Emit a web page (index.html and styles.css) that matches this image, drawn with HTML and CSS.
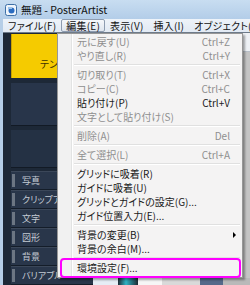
FILE: index.html
```html
<!DOCTYPE html>
<html>
    <head>
        <title>無題 - PosterArtist</title>
        <link rel="stylesheet" href="styles.css">
    </head>
    <body>
        <div class="window">
            <div class="titlebar">
                <svg class="titlebar__icon" viewBox="0 0 12 12">
                    <rect x="0.5" y="0.5" width="11" height="11" rx="2" fill="#eef4fb" stroke="#3d6fa6"/>
                    <circle cx="6.5" cy="6.5" r="3" fill="#2b6cc0"/>
                    <path d="M3 3 L7 3 L7 5 L3 5 Z" fill="#9cc3ea"/>
                </svg>
                <span>無題 - PosterArtist</span>
            </div>
            <div class="frame">
                <div class="frame__edge"></div>
                <div class="app">
                    <div class="menubar">
                        <span class="menubar__item">ファイル(F)</span>
                        <span class="menubar__item menubar__item--open">編集(E)</span>
                        <span class="menubar__item">表示(V)</span>
                        <span class="menubar__item">挿入(I)</span>
                        <span class="menubar__item">オブジェクト(O)</span>
                        <span class="menubar__item">クラフト(C)</span>
                    </div>
                    <div class="client">
                        <div class="sidebar">
                            <div class="template">テンプレート</div>
                            <div class="panel"></div>
                            <div class="panel panel--small"></div>
                            <ul class="layers">
                                <li class="layers__item">写真</li>
                                <li class="layers__item">クリップアート</li>
                                <li class="layers__item">文字</li>
                                <li class="layers__item">図形</li>
                                <li class="layers__item">背景</li>
                                <li class="layers__item">バリアブル</li>
                            </ul>
                        </div>
                        <div class="workspace">
                            <div class="toolbar">
                                <svg class="toolbar__icon" viewBox="0 0 12 12">
                                    <rect x="0.5" y="2.5" width="11" height="8" fill="#f3c64a" stroke="#b08a1c"/>
                                    <rect x="2" y="0.5" width="6" height="4" fill="#4a86d0"/>
                                </svg>
                            </div>
                            <div class="stage"></div>
                            <div class="thumbs">
                                <div class="thumbs__item thumbs__item--light"></div>
                                <div class="thumbs__item thumbs__item--teal"></div>
                                <div class="thumbs__item thumbs__item--white"></div>
                                <div class="thumbs__item thumbs__item--grey"></div>
                                <div class="thumbs__item thumbs__item--navy"></div>
                                <div class="thumbs__item thumbs__item--rest"></div>
                            </div>
                        </div>
                    </div>
                </div>
            </div>

            <ul class="dropdown">
                <li class="dropdown__item"><span>元に戻す(U)</span><span>Ctrl+Z</span></li>
                <li class="dropdown__item"><span>やり直し(R)</span><span>Ctrl+Y</span></li>
                <li class="dropdown__sep"></li>
                <li class="dropdown__item"><span>切り取り(T)</span><span>Ctrl+X</span></li>
                <li class="dropdown__item"><span>コピー(C)</span><span>Ctrl+C</span></li>
                <li class="dropdown__item dropdown__item--enabled"><span>貼り付け(P)</span><span>Ctrl+V</span></li>
                <li class="dropdown__item"><span>文字として貼り付け(S)</span></li>
                <li class="dropdown__sep"></li>
                <li class="dropdown__item"><span>削除(A)</span><span>Del</span></li>
                <li class="dropdown__sep"></li>
                <li class="dropdown__item"><span>全て選択(L)</span><span>Ctrl+A</span></li>
                <li class="dropdown__sep"></li>
                <li class="dropdown__item dropdown__item--enabled"><span>グリッドに吸着(R)</span></li>
                <li class="dropdown__item dropdown__item--enabled"><span>ガイドに吸着(U)</span></li>
                <li class="dropdown__item dropdown__item--enabled"><span>グリッドとガイドの設定(G)...</span></li>
                <li class="dropdown__item dropdown__item--enabled"><span>ガイド位置入力(E)...</span></li>
                <li class="dropdown__sep"></li>
                <li class="dropdown__item dropdown__item--enabled"><span>背景の変更(B)</span><span class="dropdown__arrow"></span></li>
                <li class="dropdown__item dropdown__item--enabled"><span>背景の余白(M)...</span></li>
                <li class="dropdown__sep"></li>
                <li class="dropdown__item dropdown__item--enabled"><span>環境設定(F)...</span></li>
            </ul>
            <div class="callout"></div>
        </div>
    </body>
</html>
```

FILE: styles.css
```css
* {
  box-sizing: border-box;
  margin: 0;
  padding: 0;
}

html,
body {
  width: 250px;
  height: 285px;
  overflow: hidden;
}

body {
  font-family: "Noto Sans CJK JP", "Noto Sans", sans-serif;
  font-feature-settings: "palt";
  line-height: 12px;
  background-color: #1d2837;
}

ul {
  list-style: none;
}

.window {
  position: relative;
  display: grid;
  grid-template-rows: 19px 1fr;
  height: 285px;
}

/* title bar */
.titlebar {
  display: flex;
  align-items: center;
  gap: 4px;
  padding-left: 5px;
  background: linear-gradient(#c8ddf1, #b3cde8);
  font-size: 10.5px;
  color: #111;
  white-space: nowrap;
}

.titlebar__icon {
  width: 12px;
  height: 12px;
}

.frame {
  display: flex;
  min-height: 0;
}

.frame__edge {
  width: 3px;
  background-color: #b6cee7;
}

.app {
  flex: 1;
  display: flex;
  flex-direction: column;
  min-width: 0;
}

/* menu bar */
.menubar {
  height: 14px;
  display: flex;
  align-items: center;
  background: linear-gradient(#eef3f9, #e2eaf4);
  border-bottom: 1px solid #6e7b8a;
  font-size: 10px;
  letter-spacing: 0.2px;
  color: #111;
  white-space: nowrap;
  overflow: hidden;
}

.menubar__item {
  flex-shrink: 0;
  height: 13px;
  display: flex;
  align-items: center;
  padding: 0 4px;
  border: 1px solid transparent;
}

.menubar__item--open {
  border-color: #8e9cb0;
  border-radius: 2px;
  background: linear-gradient(#f6f8fb, #dfe6ef);
}

/* client area */
.client {
  flex: 1;
  display: flex;
  min-height: 0;
}

.sidebar {
  width: 90px;
  display: flex;
  flex-direction: column;
  padding: 1px 0 0 8px;
  background-color: #1d2837;
}

.template {
  height: 46px;
  display: flex;
  align-items: flex-end;
  padding: 0 0 8px 28px;
  background-color: #f5cb00;
  border-left: 1px solid #c9a000;
  font-size: 10px;
  color: #3b3100;
  white-space: nowrap;
  overflow: hidden;
}

.panel {
  height: 46px;
  margin-top: 5px;
  background-color: #28354a;
  border-bottom: 1px solid #121a25;
}

.panel--small {
  height: 40px;
  margin-top: 4px;
  background-color: #243144;
}

.layers {
  margin-top: 3px;
}

.layers__item {
  height: 19px;
  display: flex;
  align-items: center;
  gap: 7px;
  padding-left: 1px;
  background-color: #29364a;
  border-top: 1px solid #3b4759;
  border-bottom: 1px solid #141d29;
  font-size: 9px;
  color: #c4cbd4;
  white-space: nowrap;
}

.layers__item::before {
  content: "";
  width: 3px;
  height: 13px;
  background-color: #6c7683;
}

.workspace {
  flex: 1;
  display: flex;
  flex-direction: column;
  min-width: 0;
  background-color: #c4c4c4;
}

.toolbar {
  height: 19px;
  display: flex;
  justify-content: flex-end;
  align-items: center;
  background-color: #eef1f5;
  border-bottom: 1px solid #b8bfc8;
}

.toolbar__icon {
  width: 12px;
  height: 12px;
  flex-shrink: 0;
  margin-right: -7px;
}

.stage {
  flex: 1;
  background-color: #c4c4c4;
}

.thumbs {
  height: 7px;
  display: flex;
}

.thumbs__item--light {
  width: 25px;
  background-color: #e6edf5;
}

.thumbs__item--teal {
  width: 20px;
  background: linear-gradient(to right, #1d2a33, #2fb3c4 40%, #1d2a33);
}

.thumbs__item--white {
  width: 24px;
  background-color: #f6f6f6;
}

.thumbs__item--grey {
  width: 38px;
  background-color: #d9d9d9;
}

.thumbs__item--navy {
  width: 23px;
  background-color: #55698a;
}

.thumbs__item--rest {
  flex: 1;
  background-color: #b9b9b9;
}

/* edit menu */
.dropdown {
  position: absolute;
  left: 57px;
  top: 33px;
  width: 186px;
  padding: 1px 2px 2px;
  border: 1px solid #979797;
  background: linear-gradient(to right, #f1f1f1 0 13px, #e2e3e3 13px 14px, #fff 14px 15px, #f4f3f3 15px);
  box-shadow: 2px 2px 2px rgba(0, 0, 0, 0.35);
  font-size: 10px;
}

.dropdown__item {
  height: 14px;
  display: flex;
  align-items: center;
  justify-content: space-between;
  padding: 0 10px 0 17px;
  line-height: 14px;
  color: #8f8f8f;
  white-space: nowrap;
}

.dropdown__item--enabled {
  color: #1a1a1a;
}

.dropdown__sep {
  height: 5px;
  margin-left: 14px;
  padding-top: 1px;
}

.dropdown__sep::before {
  content: "";
  display: block;
  border-top: 1px solid #e0e0e0;
  border-bottom: 1px solid #fff;
}

.dropdown__arrow {
  width: 0;
  height: 0;
  margin-right: -6px;
  border-left: 3px solid #000;
  border-top: 3px solid transparent;
  border-bottom: 3px solid transparent;
}

.callout {
  position: absolute;
  left: 60px;
  top: 258px;
  width: 181px;
  height: 20px;
  border: 2px solid #ff00ff;
  border-radius: 4px;
}
```
